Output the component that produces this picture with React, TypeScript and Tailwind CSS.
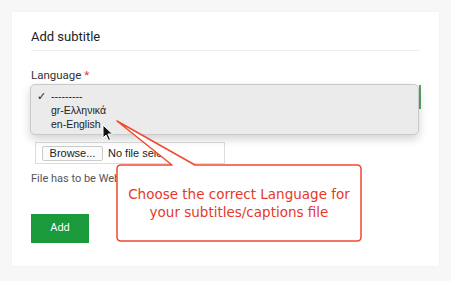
import React from "react";

const Cursor: React.FC = () => (
  <svg width="12" height="18" viewBox="0 0 12 18" className="absolute left-[102px] top-[124px]">
    <path d="M1 1 L1 14 L4 11 L6.5 16.5 L8.5 15.5 L6 10 L10.5 10 Z" fill="#111" stroke="#fff" strokeWidth="1" />
  </svg>
);

const Callout: React.FC = () => (
  <div className="absolute left-0 top-0 w-[451px] h-[281px] pointer-events-none">
    <svg width="451" height="281" className="absolute left-0 top-0">
      <path
        d="M121 165 L172 165 L117 121 L195 165 L357 165 Q361 165 361 169 L361 237 Q361 241 357 241 L121 241 Q117 241 117 237 L117 169 Q117 165 121 165 Z"
        fill="#fff"
        stroke="#ef4a32"
        strokeWidth="1.5"
        strokeLinejoin="round"
      />
    </svg>
    <div className="absolute left-[117px] top-[185px] w-[244px] text-center text-[13.5px] leading-[18px] text-[#e5392b] font-['DejaVu_Sans',sans-serif]">
      <div>Choose the correct Language for</div>
      <div>your subtitles/captions file</div>
    </div>
  </div>
);

export default function App() {
  return (
    <div className="relative w-[451px] h-[281px] bg-[#f7f7f7] p-3 font-['Roboto',sans-serif] overflow-hidden">
      <div className="bg-white h-[254px] px-[19px] pt-[16px] shadow-[0_0_2px_rgba(0,0,0,0.05)]">
        <div className="text-[13px] leading-[18px] text-[#222] pb-[4px] border-b border-[#eeeeee]">Add subtitle</div>
        <div className="mt-[17px] text-[11.5px] leading-[14px] text-[#333]">
          Language <span className="text-[#e53935]">*</span>
        </div>
        <div className="relative mt-[2px] h-[51px]">
          <div className="absolute left-0 top-[1px] w-[390px] h-[24px] border-r-[2px] border-[#5aa36b]" />
          <div className="absolute left-[-1px] top-0 w-[389px] h-[51px] bg-[#ebebeb] border border-[#c9c9c9] rounded-[5px] shadow-[0_4px_10px_rgba(0,0,0,0.18)] pt-[4px] font-['Liberation_Sans',sans-serif] text-[10.5px] leading-[14px] text-[#222]">
            <div className="flex">
              <span className="w-[20px] pl-[6px]">✓</span>
              <span>---------</span>
            </div>
            <div className="pl-[20px]">gr-Ελληνικά</div>
            <div className="pl-[20px]">en-English</div>
          </div>
        </div>
        <div className="mt-[7px] ml-[4px] w-[190px] h-[22px] border border-[#dddddd] flex items-center pl-[6px] gap-[5px] text-[11px] text-[#222] font-['Liberation_Sans',sans-serif]">
          <div className="w-[61px] h-[15px] border border-[#cccccc] rounded-[2px] bg-[#fbfbfb] flex items-center justify-center text-[11px]">
            Browse...
          </div>
          <span className="w-[60px] overflow-hidden whitespace-nowrap">No file selected.</span>
        </div>
        <div className="mt-[8px] text-[11px] leading-[14px] text-[#555]">File has to be WebVTT format</div>
        <button className="mt-[28px] w-[58px] h-[29px] bg-[#1a9a3a] text-white text-[11px] flex items-center justify-center">
          Add
        </button>
      </div>
      <Cursor />
      <Callout />
    </div>
  );
}
